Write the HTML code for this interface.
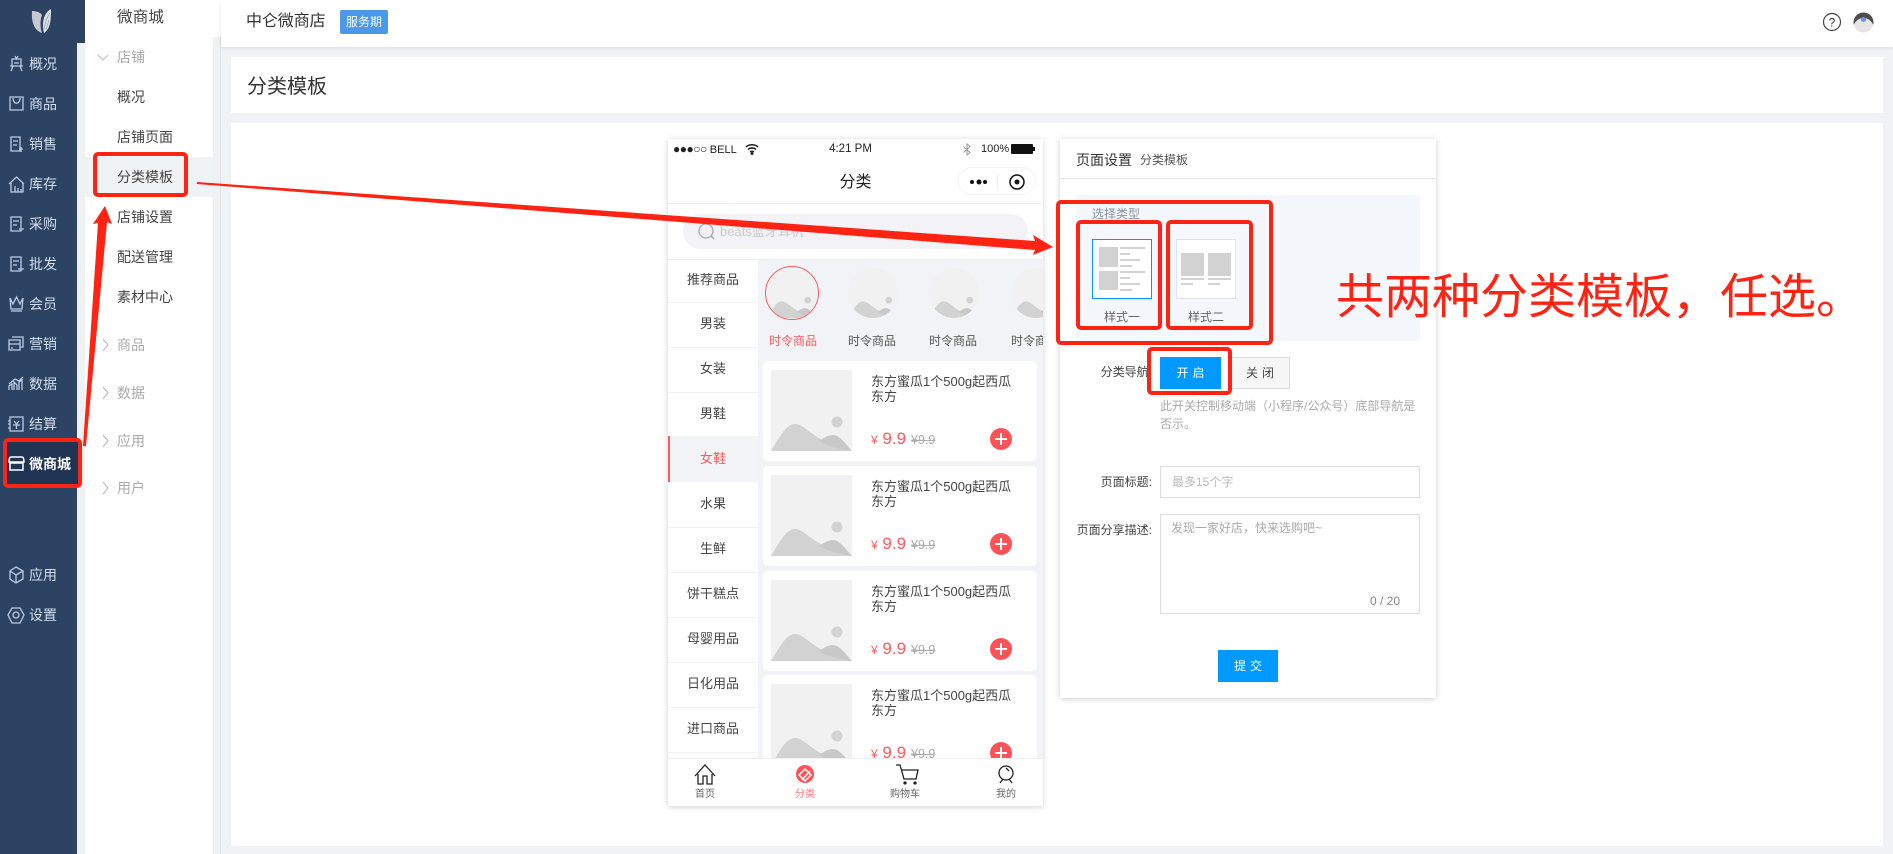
<!DOCTYPE html>
<html lang="zh"><head><meta charset="utf-8"><title>分类模板</title>
<style>
*{box-sizing:border-box}
html,body{margin:0;padding:0;width:1893px;height:854px;overflow:hidden;background:#f0f2f5;font-family:"Liberation Sans","Noto Sans CJK SC",sans-serif;color:#333}
.a{position:absolute}
.t{position:absolute;white-space:nowrap;line-height:20px;height:20px}
.nav{font-size:14px;left:29px;color:#d5deeb}
.sub{font-size:14px;left:117px;color:#444}
.g{font-size:14px;left:117px;color:#aaa}
.pn{left:668px;width:90px;text-align:center;font-size:13px;color:#444}
.cl{font-size:12px;color:#555;width:70px;text-align:center}
.card{position:absolute;left:95px;width:274px;height:100px;background:#fff;border-radius:5px}
.card svg{position:absolute;left:8px;top:9px}
.ct{position:absolute;left:108px;top:13px;width:152px;font-size:13px;line-height:15px;color:#444}
.pr{position:absolute;left:108px;top:67px;color:#ff5a5f;font-size:17px;line-height:22px;white-space:nowrap}
.pr small{font-size:12px}
.old{position:absolute;left:148px;top:70px;color:#aaa;font-size:12.5px;line-height:18px;text-decoration:line-through}
.plus{position:absolute;left:227px;top:67px;width:22px;height:22px;border-radius:50%;background:#ff5257}
.plus:before{content:"";position:absolute;left:5px;top:10px;width:12px;height:2px;background:#fff}
.plus:after{content:"";position:absolute;left:10px;top:5px;width:2px;height:12px;background:#fff}
.tb{font-size:10px;color:#666;width:60px;text-align:center;top:784px}
.red{position:absolute;border:4px solid #ff2313;border-radius:5px}
.lab{font-size:12px;color:#444;text-align:right}
.btn{font-size:12px;letter-spacing:4px;text-indent:4px;text-align:center}
svg{display:block}
</style></head>
<body>
<svg width="0" height="0" style="position:absolute"><defs>
<symbol id="ph" viewBox="0 0 81 81"><rect width="81" height="81" fill="#f1f1f1"/><circle cx="66" cy="52" r="5.5" fill="#d2d2d2"/><path d="M0 81C8 68 15 54 24 54C35 54 42 72 81 81Z" fill="#d2d2d2"/><path d="M48 71C54 67 58 65 62 65C68 65 74 73 81 81C68 79 56 76 48 71Z" fill="#c8c8c8"/></symbol>
</defs></svg>

<!-- dark sidebar -->
<div class="a" style="left:0;top:0;width:77px;height:854px;background:#2c4364"></div>
<div class="a" style="left:77px;top:0;width:8px;height:43px;background:#2c4364"></div>
<div class="a" style="left:77px;top:43px;width:8px;height:811px;background:#f0f1f3"></div>
<div class="a" style="left:6px;top:441px;width:73px;height:45px;background:#1f3353"></div>

<!-- logo -->
<svg class="a" style="left:30px;top:7px" width="24" height="27" viewBox="0 0 24 27"><path d="M2 4C6 4 10 5 12 8C10 13 10 21 12 26C6 24 1 18 2 4Z" fill="#c5c9cf"/><path d="M21 2C21 15 20 22 14 26C12 19 12 7 21 2Z" fill="#dde0e5"/><path d="M14 22C15 16 17 10 20 6M16 23C17 19 18 16 19 13" stroke="#9aa3b0" fill="none" stroke-width=".8"/></svg>

<!-- sidebar icons -->
<svg class="a" style="left:0;top:0" width="30" height="640" fill="none" stroke="#bccbe4" stroke-width="1.3">
<path d="M12 59H21V66H12ZM10 66H23M13 66L11 71M20 66L22 71M15 56L16.500 59L18 56M14 63H19"/>
<path d="M10 97H23V110H10ZM13 98C13 105 20 105 20 98"/>
<path d="M11 137H20V151H11ZM20 137V145M13 141H18M13 145H17M19 149L23 149" /><path d="M21 147V152" />
<path d="M9 184L16.500 177L24 184M11 183V192H23V183M15 192V186M18 192V188M21 192V189"/>
<path d="M11 217H21V231H11ZM13 221H19M13 225H17M19 229H24"/>
<path d="M11 257H21V271H11ZM13 261H19M13 265H17M18 269H24"/>
<path d="M10 298L13 304L16.500 297L20 304L23 298L22 309H11ZM11 311H22"/>
<path d="M9 340H20V350H9ZM12 337H23V347H20M9 344H20M11 348H13"/>
<path d="M9 390V386L12 384V390M14 390V382L17 385V390M19 390V382L22 380V390M9 384L15 379L19 381L23 377"/>
<path d="M10 417H23V431H10ZM10 421H8M10 424H8M10 428H8M14 421L16.500 424L19 421M13 425H20M16.500 424V429"/>
<path d="M10 462H23V470H10ZM9 462C9 462 9 457 11 457H22C24 457 24 462 24 462ZM10 463H23" stroke="#fff" stroke-width="1.5"/>
<path d="M16 567L23 571V579L16 583L10 579V571ZM10 571L16 575L23 571M16 575V582"/>
<path d="M12 608H20L24 615L20 623H12L8 615ZM19 615A3 3 0 1 1 13 615A3 3 0 1 1 19 615Z"/>
</svg>

<div class="t nav" style="top:54px">概况</div>
<div class="t nav" style="top:94px">商品</div>
<div class="t nav" style="top:134px">销售</div>
<div class="t nav" style="top:174px">库存</div>
<div class="t nav" style="top:214px">采购</div>
<div class="t nav" style="top:254px">批发</div>
<div class="t nav" style="top:294px">会员</div>
<div class="t nav" style="top:334px">营销</div>
<div class="t nav" style="top:374px">数据</div>
<div class="t nav" style="top:414px">结算</div>
<div class="t nav" style="top:454px;color:#fff;font-weight:bold">微商城</div>
<div class="t nav" style="top:565px">应用</div>
<div class="t nav" style="top:605px">设置</div>

<!-- sub sidebar -->
<div class="a" style="left:85px;top:0;width:128px;height:854px;background:#fff"></div>
<div class="a" style="left:213px;top:0;width:8px;height:37px;background:#fff"></div>
<div class="a" style="left:213px;top:37px;width:8px;height:817px;background:#f0f1f3"></div>
<div class="a" style="left:220px;top:37px;width:1px;height:817px;background:#e3e4e6"></div>
<div class="a" style="left:85px;top:157px;width:128px;height:40px;background:#f0f3f6"></div>
<div class="t" style="left:117px;top:8px;color:#444;font-size:15.5px;letter-spacing:.2px">微商城</div>
<div class="t g" style="top:47px">店铺</div>
<div class="t sub" style="top:87px">概况</div>
<div class="t sub" style="top:127px">店铺页面</div>
<div class="t sub" style="top:167px">分类模板</div>
<div class="t sub" style="top:207px">店铺设置</div>
<div class="t sub" style="top:247px">配送管理</div>
<div class="t sub" style="top:287px">素材中心</div>
<div class="t g" style="top:335px">商品</div>
<div class="t g" style="top:383px">数据</div>
<div class="t g" style="top:431px">应用</div>
<div class="t g" style="top:478px">用户</div>
<svg class="a" style="left:95px;top:50px" width="16" height="460" fill="none" stroke="#bbb" stroke-width="1.1">
<path d="M3 5L8 10L13 5"/><path d="M8 289L13 295L8 301"/><path d="M8 337L13 343L8 349"/><path d="M8 385L13 391L8 397"/><path d="M8 432L13 438L8 444"/>
</svg>

<!-- header -->
<div class="a" style="left:221px;top:0;width:1672px;height:47px;background:#fff;box-shadow:0 1px 4px rgba(0,0,0,.1)"></div>
<div class="t" style="left:246px;top:12px;font-size:16px;color:#333;letter-spacing:-.1px">中仑微商店</div>
<div class="a" style="left:340px;top:10px;width:48px;height:24px;background:#4c97e8;border-radius:2px;color:#fff;font-size:12px;line-height:24px;text-align:center">服务期</div>
<svg class="a" style="left:1822px;top:12px" width="20" height="20"><circle cx="10" cy="10" r="8.500" fill="none" stroke="#444" stroke-width="1.2"/><text x="10" y="14.500" text-anchor="middle" font-size="12" fill="#333" font-family="Liberation Sans">?</text></svg>
<svg class="a" style="left:1853px;top:12px" width="21" height="21"><defs><clipPath id="av"><circle cx="10.500" cy="10.500" r="10"/></clipPath></defs><g clip-path="url(#av)"><rect width="21" height="21" fill="#e6e6e6"/><path d="M0 0H21V14C19 10 16 6 10.500 6C5 6 2 10 0 14Z" fill="#4d4d52"/><circle cx="10.500" cy="7.500" r="2.500" fill="#6f8fe0"/></g></svg>

<!-- title card -->
<div class="a" style="left:231px;top:57px;width:1652px;height:56px;background:#fff"></div>
<div class="t" style="left:247px;top:77px;font-size:20px;color:#333">分类模板</div>

<!-- content -->
<div class="a" style="left:231px;top:123px;width:1652px;height:723px;background:#fff"></div>

<!-- phone -->
<div class="a" style="left:668px;top:139px;width:375px;height:667px;background:#fff;box-shadow:0 1px 6px rgba(0,0,0,.18);overflow:hidden">
 <div class="a" style="left:5px;top:3px;font-size:11px;line-height:14px;color:#222;white-space:nowrap"><span style="letter-spacing:-.5px;font-size:12px">●●●○○</span> BELL</div>
 <svg class="a" style="left:77px;top:4px" width="14" height="12" fill="none" stroke="#222" stroke-width="1.4"><path d="M1 4C4 1 10 1 13 4M3 6.500C5 4.500 9 4.500 11 6.500M5 9C6 8 8 8 9 9"/><circle cx="7" cy="10.500" r=".8" fill="#222"/></svg>
 <div class="a" style="left:0;width:365px;top:3px;text-align:center;font-size:11.500px;line-height:14px;color:#222">4:21 PM</div>
 <svg class="a" style="left:295px;top:4px" width="8" height="13" fill="none" stroke="#999" stroke-width="1"><path d="M0.500 3.500L7 9.500L4 12V1L7 3.500L0.500 9.500"/></svg>
 <div class="a" style="left:313px;top:3px;font-size:11px;line-height:14px;color:#222">100%</div>
 <div class="a" style="left:343px;top:5px;width:22px;height:10px;background:#111;border-radius:1px"></div>
 <div class="a" style="left:365px;top:8px;width:2px;height:4px;background:#111"></div>
 <div class="a" style="left:0;width:375px;top:32px;text-align:center;font-size:16px;line-height:24px;color:#222">分类</div>
 <div class="a" style="left:290px;top:28px;width:78px;height:28px;border:1px solid #f3f3f3;border-radius:14px"></div>
 <svg class="a" style="left:301px;top:35px" width="60" height="16"><circle cx="3" cy="8" r="2" fill="#111"/><circle cx="10" cy="8" r="2.500" fill="#111"/><circle cx="16" cy="8" r="2" fill="#111"/><rect x="28" y="0" width="1" height="16" fill="#eee"/><circle cx="48" cy="8" r="7" fill="none" stroke="#111" stroke-width="1.5"/><circle cx="48" cy="8" r="2.500" fill="#111"/></svg>
 <div class="a" style="left:0;top:64px;width:375px;height:1px;background:#eee"></div>
 <div class="a" style="left:15px;top:75px;width:345px;height:35px;background:#f2f2f7;border-radius:18px"></div>
 <svg class="a" style="left:29px;top:83px" width="20" height="20" fill="none" stroke="#aaa" stroke-width="1.3"><circle cx="9" cy="9" r="7"/><path d="M14 14L17 17"/></svg>
 <div class="a" style="left:52px;top:84px;font-size:13px;line-height:18px;color:#ccc">beats蓝牙耳机</div>
 <div class="a" style="left:0;top:120px;width:375px;height:1px;background:#eee"></div>

 <!-- right area -->
 <div class="a" style="left:90px;top:121px;width:285px;height:546px;background:#f1f3f7;overflow:hidden">
  <div class="a" style="left:7px;top:6px;width:54px;height:54px;border:1px solid #ff5a5f;border-radius:50%;background:#f1f1f1;overflow:hidden"><svg class="a" style="left:1px;top:1px;" width="50" height="50"><use href="#ph"/></svg></div>
  <div class="a" style="left:90px;top:8px;width:50px;height:50px;border-radius:50%;overflow:hidden"><svg width="50" height="50"><use href="#ph"/></svg></div>
  <div class="a" style="left:171px;top:8px;width:50px;height:50px;border-radius:50%;overflow:hidden"><svg width="50" height="50"><use href="#ph"/></svg></div>
  <div class="a" style="left:253px;top:8px;width:50px;height:50px;border-radius:50%;overflow:hidden"><svg width="50" height="50"><use href="#ph"/></svg></div>
  <div class="t cl" style="left:0px;top:71px;color:#ff5a5f">时令商品</div>
  <div class="t cl" style="left:79px;top:71px">时令商品</div>
  <div class="t cl" style="left:160px;top:71px">时令商品</div>
  <div class="t cl" style="left:242px;top:71px">时令商品</div>

  <div class="card" style="left:5px;top:101px"><svg width="81" height="81"><use href="#ph"/></svg><div class="ct">东方蜜瓜1个500g起西瓜东方</div><div class="pr"><small>¥</small> 9.9</div><div class="old">¥9.9</div><div class="plus"></div></div>
  <div class="card" style="left:5px;top:206px"><svg width="81" height="81"><use href="#ph"/></svg><div class="ct">东方蜜瓜1个500g起西瓜东方</div><div class="pr"><small>¥</small> 9.9</div><div class="old">¥9.9</div><div class="plus"></div></div>
  <div class="card" style="left:5px;top:311px"><svg width="81" height="81"><use href="#ph"/></svg><div class="ct">东方蜜瓜1个500g起西瓜东方</div><div class="pr"><small>¥</small> 9.9</div><div class="old">¥9.9</div><div class="plus"></div></div>
  <div class="card" style="left:5px;top:415px"><svg width="81" height="81"><use href="#ph"/></svg><div class="ct">东方蜜瓜1个500g起西瓜东方</div><div class="pr"><small>¥</small> 9.9</div><div class="old">¥9.9</div><div class="plus"></div></div>
 </div>

 <!-- left nav -->
 <div class="a" style="left:0;top:121px;width:90px;height:546px;background:#fff"></div>
 <div class="a" style="left:0;top:297px;width:90px;height:46px;background:#f3f4f7;border-left:2px solid #ff5a5f"></div>
 <div class="a" style="left:0;top:163px;width:90px;height:1px;background:#f1f1f1"></div>
 <div class="a" style="left:0;top:208px;width:90px;height:1px;background:#f1f1f1"></div>
 <div class="a" style="left:0;top:253px;width:90px;height:1px;background:#f1f1f1"></div>
 <div class="a" style="left:0;top:388px;width:90px;height:1px;background:#f1f1f1"></div>
 <div class="a" style="left:0;top:433px;width:90px;height:1px;background:#f1f1f1"></div>
 <div class="a" style="left:0;top:478px;width:90px;height:1px;background:#f1f1f1"></div>
 <div class="a" style="left:0;top:523px;width:90px;height:1px;background:#f1f1f1"></div>
 <div class="a" style="left:0;top:568px;width:90px;height:1px;background:#f1f1f1"></div>
 <div class="a" style="left:0;top:613px;width:90px;height:1px;background:#f1f1f1"></div>
 <div class="t pn" style="left:0;top:131px">推荐商品</div>
 <div class="t pn" style="left:0;top:175px">男装</div>
 <div class="t pn" style="left:0;top:220px">女装</div>
 <div class="t pn" style="left:0;top:265px">男鞋</div>
 <div class="t pn" style="left:0;top:310px;color:#ff5a5f">女鞋</div>
 <div class="t pn" style="left:0;top:355px">水果</div>
 <div class="t pn" style="left:0;top:400px">生鲜</div>
 <div class="t pn" style="left:0;top:445px">饼干糕点</div>
 <div class="t pn" style="left:0;top:490px">母婴用品</div>
 <div class="t pn" style="left:0;top:535px">日化用品</div>
 <div class="t pn" style="left:0;top:580px">进口商品</div>

 <!-- tab bar -->
 <div class="a" style="left:0;top:619px;width:375px;height:48px;background:#fff;border-top:1px solid #eee"></div>
 <svg class="a" style="left:0;top:619px" width="375" height="34" fill="none" stroke="#222" stroke-width="1.3">
  <path d="M27 18L37 7L47 18M30 16V26H35V18H39V26H44V16"/>
  <circle cx="137" cy="16" r="9" fill="#ff5257" stroke="none"/><path d="M131 17L137 11L143 17L137 23Z M134 22L142 13" stroke="#fff" stroke-width="1.500"/>
  <path d="M228 7H232L236 21H248L250 12H233"/><circle cx="237" cy="25" r="1" fill="#222"/><circle cx="247" cy="25" r="1" fill="#222"/>
  <circle cx="338" cy="15" r="7"/><path d="M332 25L335 21M344 25L341 21M338 10L341 13"/>
 </svg>
 <div class="t tb" style="left:7px;top:646px">首页</div>
 <div class="t tb" style="left:107px;top:646px;color:#ff7b7f">分类</div>
 <div class="t tb" style="left:207px;top:646px">购物车</div>
 <div class="t tb" style="left:308px;top:646px">我的</div>
</div>

<!-- settings panel -->
<div class="a" style="left:1060px;top:139px;width:376px;height:559px;background:#fff;box-shadow:0 1px 6px rgba(0,0,0,.2)"></div>
<div class="t" style="left:1076px;top:150px;font-size:14px;color:#333">页面设置</div>
<div class="t" style="left:1140px;top:150px;font-size:12px;color:#555">分类模板</div>
<div class="a" style="left:1060px;top:178px;width:376px;height:1px;background:#dfe3ee"></div>
<div class="a" style="left:1076px;top:195px;width:344px;height:146px;background:#f4f7fb"></div>
<div class="t" style="left:1092px;top:204px;font-size:12px;color:#8a94a6">选择类型</div>

<div class="a" style="left:1092px;top:239px;width:60px;height:60px;background:#fff;border:1px solid #0099ff"></div>
<div class="a" style="left:1176px;top:239px;width:60px;height:60px;background:#fff;border:1px solid #dfe3ea"></div>
<svg class="a" style="left:1092px;top:239px" width="150" height="60" fill="#d2d2d2">
 <rect x="7" y="8" width="19" height="20"/><rect x="7" y="32" width="19" height="19"/>
 <rect x="28" y="8" width="25" height="2"/><rect x="28" y="14" width="10" height="2"/><rect x="28" y="20" width="20" height="2"/><rect x="28" y="26" width="12" height="2"/>
 <rect x="28" y="32" width="25" height="2"/><rect x="28" y="38" width="10" height="2"/><rect x="28" y="44" width="20" height="2"/><rect x="28" y="50" width="12" height="2"/>
 <rect x="89" y="14" width="23" height="23"/><rect x="116" y="14" width="23" height="23"/>
 <rect x="89" y="39" width="23" height="2"/><rect x="116" y="39" width="23" height="2"/><rect x="89" y="44" width="12" height="2"/><rect x="116" y="44" width="12" height="2"/>
</svg>
<div class="t" style="left:1092px;width:60px;text-align:center;top:307px;font-size:12px;color:#666">样式一</div>
<div class="t" style="left:1176px;width:60px;text-align:center;top:307px;font-size:12px;color:#666">样式二</div>

<div class="t lab" style="left:1076px;width:76px;top:362px">分类导航:</div>
<div class="a btn" style="left:1160px;top:357px;width:61px;height:32px;background:#0099ff;color:#fff;line-height:32px">开启</div>
<div class="a btn" style="left:1230px;top:357px;width:60px;height:32px;background:#f7f7f7;border:1px solid #ddd;color:#444;line-height:30px">关闭</div>
<div class="a" style="left:1160px;top:397px;width:262px;font-size:12px;line-height:18px;color:#aaa">此开关控制移动端（小程序/公众号）底部导航是否示。</div>

<div class="t lab" style="left:1076px;width:76px;top:472px">页面标题:</div>
<div class="a" style="left:1160px;top:466px;width:260px;height:32px;background:#fff;border:1px solid #ddd;padding-left:11px;font-size:12px;line-height:30px;color:#bbb">最多15个字</div>
<div class="t lab" style="left:1076px;width:76px;top:520px">页面分享描述:</div>
<div class="a" style="left:1160px;top:514px;width:260px;height:100px;background:#fff;border:1px solid #ddd"></div>
<div class="t" style="left:1171px;top:518px;font-size:12px;color:#aaa">发现一家好店，快来选购吧~</div>
<div class="t" style="left:1370px;top:591px;font-size:12px;color:#888">0 / 20</div>
<div class="a btn" style="left:1218px;top:650px;width:60px;height:32px;background:#0099ff;color:#fff;line-height:32px">提交</div>

<!-- annotation -->
<div class="t" style="left:1336px;top:268px;height:60px;line-height:60px;font-size:48px;color:#ff2313">共两种分类模板，任选。</div>
<div class="red" style="left:93px;top:152px;width:95px;height:45px"></div>
<div class="red" style="left:3px;top:438px;width:79px;height:50px"></div>
<div class="red" style="left:1056px;top:200px;width:217px;height:145px"></div>
<div class="red" style="left:1076px;top:220px;width:86px;height:110px"></div>
<div class="red" style="left:1166px;top:220px;width:87px;height:110px"></div>
<div class="red" style="left:1147px;top:347px;width:85px;height:48px"></div>
<svg class="a" style="left:0;top:0" width="1893" height="854" fill="#ff2313">
 <path d="M197 182L1035 241L1033 235L1053 247L1033 255L1035 250L197 184Z"/>
 <path d="M83 446L98 223L93 224L105 206L112 224L107 222L86 446Z"/>
</svg>
</body></html>
